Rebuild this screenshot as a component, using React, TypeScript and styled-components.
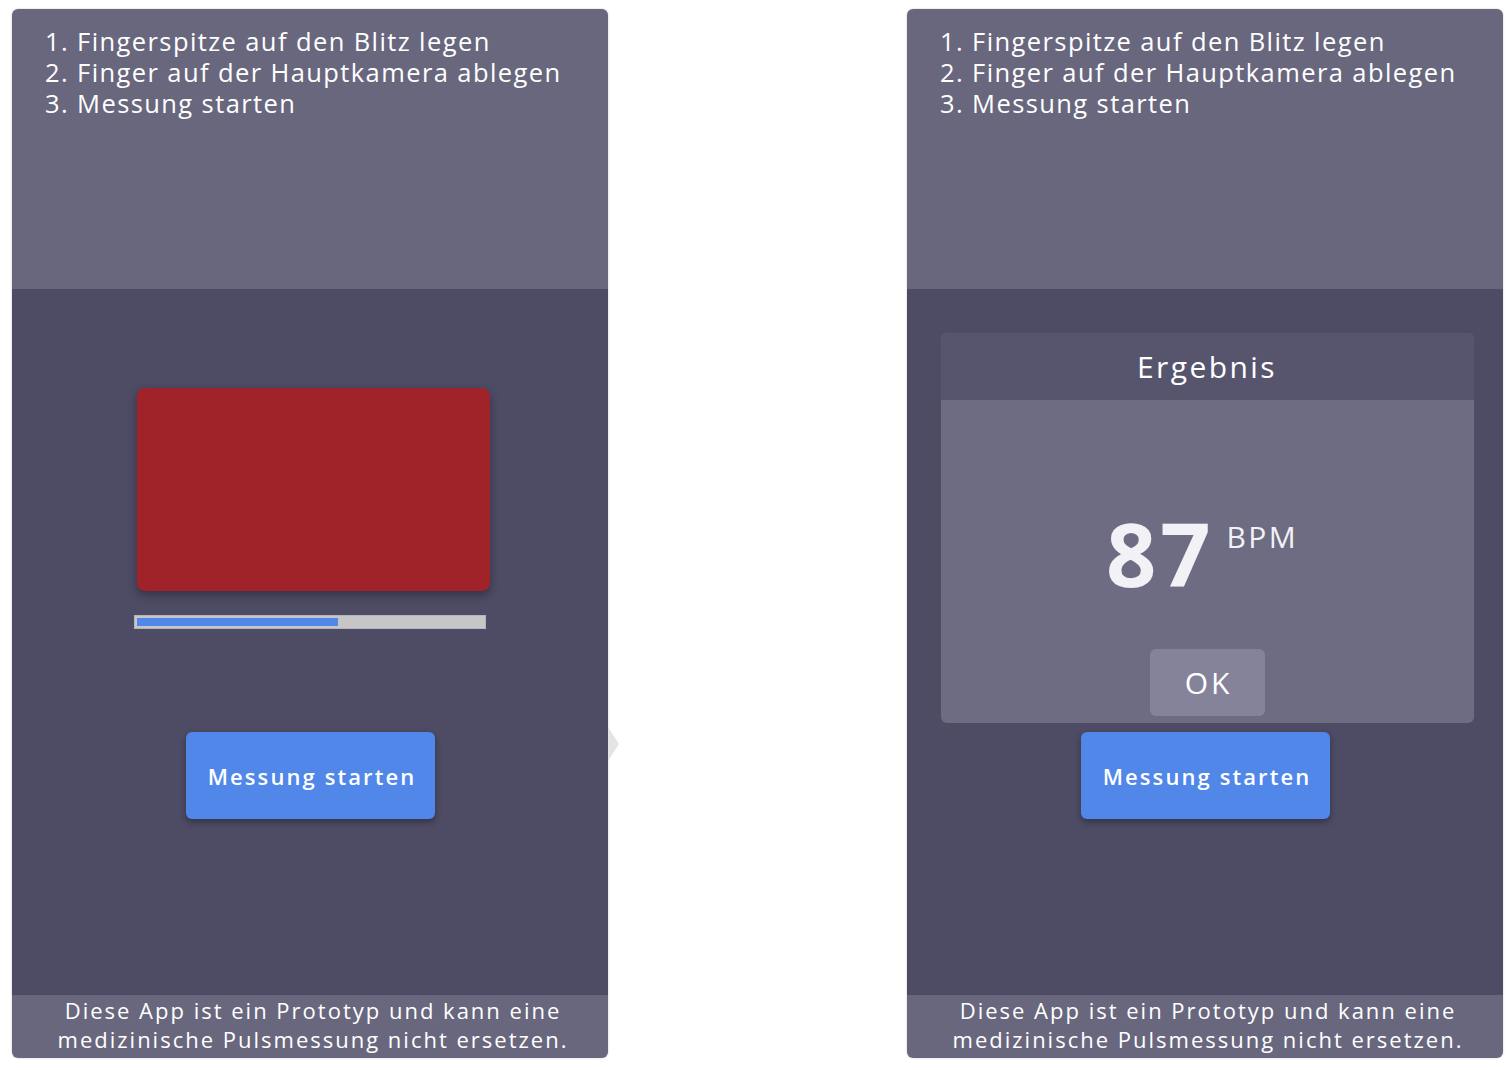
import React from 'react'
import styled, { createGlobalStyle } from 'styled-components'

const GlobalStyle = createGlobalStyle`
  html, body {
    margin: 0;
    padding: 0;
    background: #ffffff;
    font-family: "Open Sans", "Noto Sans", sans-serif;
  }
`

const Page = styled.div`
  display: flex;
  justify-content: space-between;
  width: 1512px;
  height: 1070px;
  padding: 9px 9px 0 12px;
  box-sizing: border-box;
`

const Phone = styled.div`
  position: relative;
  display: flex;
  flex-direction: column;
  width: 596px;
  height: 1049px;
  border-radius: 6px;
  overflow: hidden;
  box-shadow: 0 0 2px rgba(0, 0, 0, 0.25);
  color: #ffffff;
`

const Instructions = styled.ol`
  height: 280px;
  margin: 0;
  padding: 17px 0 0 33px;
  box-sizing: border-box;
  list-style: none;
  background: #69677e;
  font-size: 25.5px;
  line-height: 31px;
  letter-spacing: 1.4px;
`

const Main = styled.div`
  flex: 1;
  display: flex;
  flex-direction: column;
  align-items: center;
  background: #4e4c64;
`

const Stage = styled.div<{ $top: number }>`
  height: 443px;
  padding-top: ${p => p.$top}px;
  box-sizing: border-box;
  display: flex;
  flex-direction: column;
  align-items: center;
`

const FlashBox = styled.div`
  width: 353px;
  height: 203px;
  margin-left: 6px;
  background: #a0232a;
  border-radius: 8px;
  box-shadow: 0 4px 8px rgba(20, 18, 40, 0.45);
`

const Progress = styled.div`
  width: 352px;
  height: 14px;
  margin-top: 24px;
  padding: 2px;
  box-sizing: border-box;
  background: #c6c6c6;
  border: 1px solid #b4b4bc;
`

const ProgressFill = styled.div`
  height: 100%;
  background: #5087e8;
`

const StartButton = styled.button`
  width: 249px;
  height: 87px;
  padding: 0 0 0 4px;
  border: none;
  border-radius: 6px;
  background: #5087e8;
  color: #ffffff;
  font-family: inherit;
  font-size: 22px;
  font-weight: 600;
  letter-spacing: 2.1px;
  box-shadow: 0 3px 6px rgba(20, 18, 40, 0.45);
`

const Dialog = styled.div`
  width: 533px;
  height: 390px;
  margin-left: 4px;
  display: flex;
  flex-direction: column;
  border-radius: 6px;
  overflow: hidden;
  background: #6e6c82;
`

const DialogTitle = styled.div`
  height: 67px;
  display: flex;
  align-items: center;
  justify-content: center;
  background: #57556e;
  font-size: 30px;
  font-weight: 500;
  letter-spacing: 2.4px;
`

const DialogBody = styled.div`
  flex: 1;
  display: flex;
  flex-direction: column;
  align-items: center;
  padding-bottom: 7px;
`

const Reading = styled.div`
  display: flex;
  align-items: flex-start;
  gap: 12px;
  padding-top: 109px;
  padding-right: 10px;
`

const Value = styled.span`
  font-size: 88px;
  font-weight: 700;
  line-height: 1;
  letter-spacing: 4px;
  color: #f2f2f6;
`

const Unit = styled.span`
  margin-top: 13px;
  font-size: 30px;
  font-weight: 500;
  line-height: 1;
  letter-spacing: 2.4px;
  color: #f2f2f6;
`

const OkButton = styled.button`
  width: 115px;
  height: 67px;
  margin-top: auto;
  padding: 0 0 0 3px;
  border: none;
  border-radius: 6px;
  background: #85839a;
  color: #ffffff;
  font-family: inherit;
  font-size: 30px;
  font-weight: 500;
  letter-spacing: 3px;
`

const Disclaimer = styled.p`
  height: 63px;
  margin: 0;
  padding: 1px 0 0 6px;
  box-sizing: border-box;
  background: #69677e;
  text-align: center;
  font-size: 22px;
  line-height: 29px;
  letter-spacing: 2px;
`

const Arrow = styled.div`
  position: absolute;
  left: 608px;
  top: 727px;
  width: 0;
  height: 0;
  border-top: 17px solid transparent;
  border-bottom: 17px solid transparent;
  border-left: 11px solid #e4e4e6;
`

const steps = [
  '1. Fingerspitze auf den Blitz legen',
  '2. Finger auf der Hauptkamera ablegen',
  '3. Messung starten',
]

const Steps = () => (
  <Instructions>
    {steps.map(s => <li key={s}>{s}</li>)}
  </Instructions>
)

const Footer = () => (
  <Disclaimer>
    Diese App ist ein Prototyp und kann eine<br />
    medizinische Pulsmessung nicht ersetzen.
  </Disclaimer>
)

export default function App() {
  const progress = 0.58
  return (
    <>
      <GlobalStyle />
      <Page>
        <Phone>
          <Steps />
          <Main>
            <Stage $top={99}>
              <FlashBox />
              <Progress>
                <ProgressFill style={{ width: `${progress * 100}%` }} />
              </Progress>
            </Stage>
            <StartButton>Messung starten</StartButton>
          </Main>
          <Footer />
        </Phone>
        <Arrow />
        <Phone>
          <Steps />
          <Main>
            <Stage $top={44}>
              <Dialog>
                <DialogTitle>Ergebnis</DialogTitle>
                <DialogBody>
                  <Reading>
                    <Value>87</Value>
                    <Unit>BPM</Unit>
                  </Reading>
                  <OkButton>OK</OkButton>
                </DialogBody>
              </Dialog>
            </Stage>
            <StartButton>Messung starten</StartButton>
          </Main>
          <Footer />
        </Phone>
      </Page>
    </>
  )
}
